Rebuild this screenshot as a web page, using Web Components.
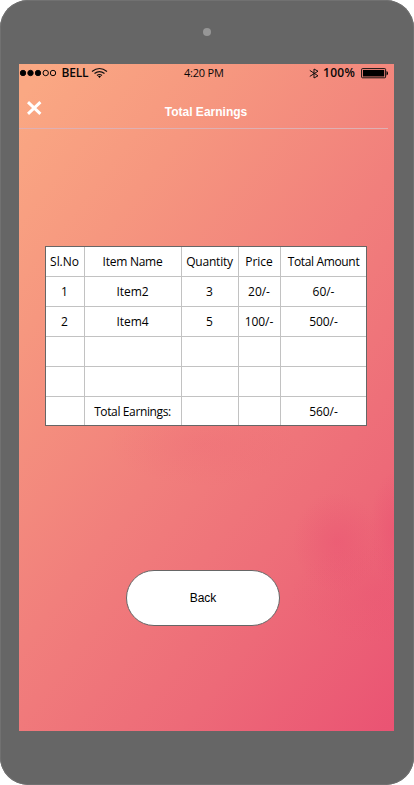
<!DOCTYPE html>
<html lang="en">
<head>
<meta charset="utf-8">
<title>Total Earnings</title>
<style>html,body{margin:0;background:#fff}</style>
</head>
<body>
<phone-frame>
  <status-bar></status-bar>
  <title-bar>Total Earnings</title-bar>
  <earnings-table></earnings-table>
  <pill-button>Back</pill-button>
</phone-frame>
<script>
const define = (name, html) => {
  const template = document.createElement('template');
  template.innerHTML = html;
  customElements.define(name, class extends HTMLElement {
    constructor() {
      super();
      this.attachShadow({mode: 'open'}).append(template.content.cloneNode(true));
    }
  });
};

define('phone-frame', `<style>
:host{display:flex;flex-direction:column;box-sizing:border-box;width:414px;height:785px;padding:28px 20px 54px 19px;background:#666;border-radius:28px;box-shadow:inset 0 0 0 1px #717171}
.camera{width:8px;height:8px;border-radius:50%;background:#969696;margin:0 0 28px 184px;flex:none}
main{display:flex;flex-direction:column;width:375px;height:667px;background:
 radial-gradient(ellipse 44px 50px at 318px 478px,rgba(233,75,112,.35),transparent),
 radial-gradient(ellipse 24px 58px at 375px 466px,rgba(233,75,112,.38),transparent),
 radial-gradient(ellipse 85px 50px at 355px 530px,rgba(233,75,112,.18),transparent),
 radial-gradient(ellipse 95px 42px at 185px 380px,rgba(238,95,116,.2),transparent),
 linear-gradient(128deg,#faa883 3%,#f6977f 24%,#f17f7c 51%,#ed6a78 76%,#ea5373 100%)}
</style><div class="camera"></div><main><slot></slot></main>`);

define('status-bar', `<style>
:host{display:flex;align-items:center;height:18px;flex:none;font:12px/18px "Open Sans","Noto Sans",sans-serif;color:#080808}
svg{display:block;flex:none}
.carrier{font-weight:600;width:28px;margin-left:4.5px;letter-spacing:-.2px}
.time{width:42px;margin-left:57px;font-size:11px;letter-spacing:-.2px;white-space:nowrap}
.level{width:34px;font-weight:600;white-space:nowrap;font-size:12px;letter-spacing:.3px}
</style>
<svg width="38" height="18"><g stroke="#080808"><g><circle cx="4" cy="9" r="2.7"/><circle cx="11.5" cy="9" r="2.7"/><circle cx="19" cy="9" r="2.7"/></g><g fill="none"><circle cx="26.7" cy="9" r="2.7"/><circle cx="34" cy="9" r="2.7"/></g></g></svg>
<span class="carrier">BELL</span>
<svg width="17" height="18" viewBox="0 0 17 18" style="margin-left:1.5px"><g fill="none" stroke="#111" stroke-width="1.2"><path d="M1 7.5Q8.5 1.5 16 7.5M3.5 9.5Q8.5 5.7 13.5 9.5M6 11.4Q8.5 9.6 11 11.4"/></g><path d="M7 12.3Q8.5 11.3 10 12.3L8.5 14Z"/></svg>
<span class="time" style="margin-left:76px">4:20 PM</span>
<svg width="10" height="18" style="margin-left:83px"><path d="M.8 6.4 9 11.8 5 14V5L9 7.2.8 12.4" fill="none" stroke="#111"/></svg>
<span class="level" style="margin-left:4px">100%</span>
<svg width="28" height="18" style="margin-left:4px"><rect x=".6" y="4.6" width="24" height="9.2" rx=".8" fill="none" stroke="#111"/><rect x="2" y="6" width="21.2" height="6.5"/><path d="M25.5 7Q27 7.3 27 9.2T25.5 11.5Z"/></svg>`);

define('title-bar', `<style>
:host{display:grid;grid-template-columns:32px 310px;box-sizing:border-box;width:369px;height:47px;flex:none;border-bottom:1px solid #dfb0b3;color:#fff;font:bold 12px/14px "Liberation Sans",Arial,sans-serif}
svg{margin:19px 0 0 8px}
h1{font:inherit;margin:23px 0 0;text-align:center}
</style><svg width="15" height="14"><path d="M1 1.2 13.4 12.8M13.4 1.2 1 12.8" stroke="#fff" stroke-width="3"/></svg><h1><slot></slot></h1>`);

define('table-cell', `<style>
:host{display:flex;align-items:center;justify-content:center;box-sizing:border-box;padding-right:1px;border-right:1px solid #c2c2c2;border-bottom:1px solid #c2c2c2;white-space:nowrap}
:host(.last){border-right:0;padding-right:0}:host(.foot){border-bottom:0;padding-top:2px}
</style><span><slot></slot></span>`);

const rows = [
  ['Sl.No', 'Item Name', 'Quantity', 'Price', 'Total Amount'],
  ['1', 'Item2', '3', '20/-', '60/-'],
  ['2', 'Item4', '5', '100/-', '500/-'],
  ['', '', '', '', ''],
  ['', '', '', '', ''],
  ['', 'Total Earnings:', '', '', '560/-']
];
const spacing = {'Item Name': '-.25px', 'Quantity': '-.2px', 'Total Amount': '-.35px', 'Total Earnings:': '-.37px'};
const cells = rows.map((row, r) => row.map((text, c) =>
  `<table-cell class="${c === 4 ? 'last' : ''} ${r === 5 ? 'foot' : ''}" style="letter-spacing:${spacing[text] || '-.05px'}">${text}</table-cell>`).join('')).join('');
define('earnings-table', `<style>
:host{display:grid;grid-template-columns:39px 97px 57px 42px 85px;grid-template-rows:repeat(5,30px) 28px;width:320px;flex:none;margin:117px 0 0 26px;border:1px solid #666;background:#fff;color:#000;font:12px/16px "Open Sans","Noto Sans",sans-serif}
</style>${cells}`);

define('pill-button', `<style>
:host{display:block;margin:144px 0 0 107px}
button{display:block;box-sizing:border-box;width:154px;height:56px;padding:0;border:1px solid #666;border-radius:28px;background:#fff;color:#000;font:12px/14px "Liberation Sans",Arial,sans-serif}
</style><button><slot></slot></button>`);
</script>
</body>
</html>
